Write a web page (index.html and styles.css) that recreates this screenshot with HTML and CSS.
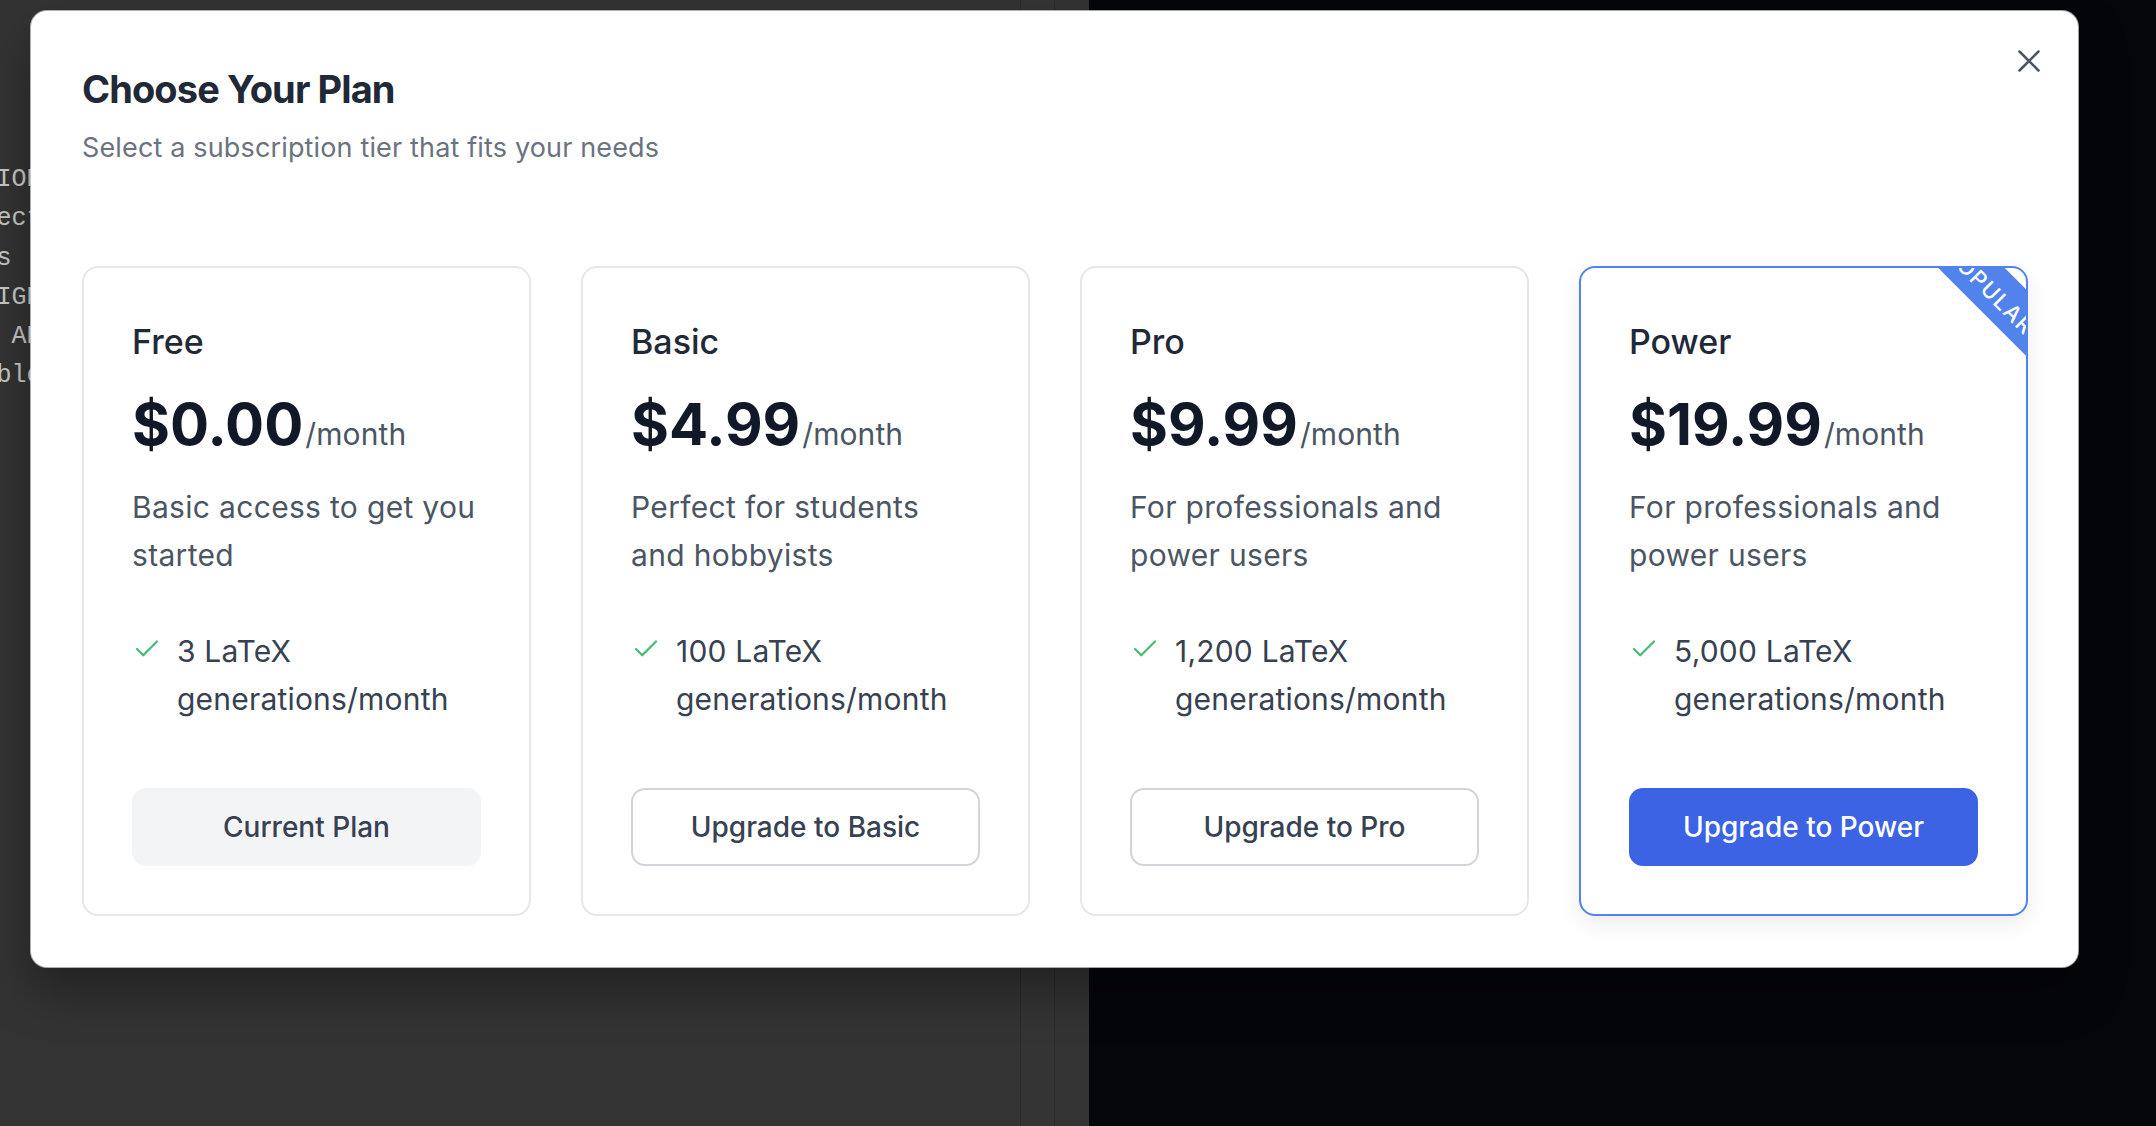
FILE: index.html
```html
<!DOCTYPE html>
<html lang="en">
<head>
<meta charset="utf-8">
<title>Choose Your Plan</title>
<link rel="stylesheet" href="styles.css">
</head>
<body>
<div class="scene">
  <div class="editor">
    <pre class="code">IONS
ection
s
IGNED
 AND
ble</pre>
  </div>
  <div class="sep"></div>
  <div class="pane"></div>
  <div class="sep"></div>
  <div class="pane pane-b"></div>
  <div class="preview"></div>
</div>

<div class="modal">
  <button class="close" aria-label="Close">
    <svg viewBox="0 0 24 24" width="38" height="38" fill="none" stroke="#4b5563" stroke-width="1.6" stroke-linecap="round"><path d="M6 6l12 12M18 6L6 18"/></svg>
  </button>
  <h2 class="title">Choose Your Plan</h2>
  <p class="subtitle">Select a subscription tier that fits your needs</p>

  <div class="plans">
    <div class="plan">
      <h3 class="plan-name">Free</h3>
      <div class="price-row"><span class="price">$0.00</span><span class="per">/month</span></div>
      <p class="desc">Basic access to get you started</p>
      <ul class="features">
        <li><svg class="check" viewBox="0 0 24 24" width="30" height="30" fill="none" stroke="#48bb78" stroke-width="1.8" stroke-linecap="round" stroke-linejoin="round"><polyline points="20 6 9 17 4 12"/></svg><span>3 LaTeX generations/month</span></li>
      </ul>
      <button class="btn btn-current">Current Plan</button>
    </div>

    <div class="plan">
      <h3 class="plan-name">Basic</h3>
      <div class="price-row"><span class="price">$4.99</span><span class="per">/month</span></div>
      <p class="desc">Perfect for students and hobbyists</p>
      <ul class="features">
        <li><svg class="check" viewBox="0 0 24 24" width="30" height="30" fill="none" stroke="#48bb78" stroke-width="1.8" stroke-linecap="round" stroke-linejoin="round"><polyline points="20 6 9 17 4 12"/></svg><span>100 LaTeX generations/month</span></li>
      </ul>
      <button class="btn btn-outline">Upgrade to Basic</button>
    </div>

    <div class="plan">
      <h3 class="plan-name">Pro</h3>
      <div class="price-row"><span class="price">$9.99</span><span class="per">/month</span></div>
      <p class="desc">For professionals and power users</p>
      <ul class="features">
        <li><svg class="check" viewBox="0 0 24 24" width="30" height="30" fill="none" stroke="#48bb78" stroke-width="1.8" stroke-linecap="round" stroke-linejoin="round"><polyline points="20 6 9 17 4 12"/></svg><span>1,200 LaTeX generations/month</span></li>
      </ul>
      <button class="btn btn-outline">Upgrade to Pro</button>
    </div>

    <div class="plan plan-featured">
      <div class="ribbon">POPULAR</div>
      <h3 class="plan-name">Power</h3>
      <div class="price-row"><span class="price">$19.99</span><span class="per">/month</span></div>
      <p class="desc">For professionals and power users</p>
      <ul class="features">
        <li><svg class="check" viewBox="0 0 24 24" width="30" height="30" fill="none" stroke="#48bb78" stroke-width="1.8" stroke-linecap="round" stroke-linejoin="round"><polyline points="20 6 9 17 4 12"/></svg><span>5,000 LaTeX generations/month</span></li>
      </ul>
      <button class="btn btn-primary">Upgrade to Power</button>
    </div>
  </div>
</div>
</body>
</html>
```

FILE: styles.css
```css
* { box-sizing: border-box; }

html, body {
  margin: 0;
  padding: 0;
  width: 2156px;
  height: 1126px;
  overflow: hidden;
  font-family: Inter, "Noto Sans", "Liberation Sans", sans-serif;
}

body { position: relative; background: #05060a; }

.scene {
  display: flex;
  width: 2156px;
  height: 1126px;
}

.editor {
  width: 1020px;
  background: #333333;
  overflow: hidden;
}

.code {
  margin: 160px 0 0 -3.5px;
  font-family: "Liberation Mono", "DejaVu Sans Mono", monospace;
  font-size: 25px;
  line-height: 39.3px;
  color: #c8c8c8;
}

.sep { width: 1px; background: #2a2a2a; }
.pane { width: 33px; background: #343434; }
.pane-b { width: 34px; background: #333333; }
.preview { flex: 1; background: #05060a; }

.modal {
  position: absolute;
  left: 31px;
  top: 11px;
  width: 2047px;
  height: 956px;
  background: #ffffff;
  border-radius: 16px;
  padding: 54px 50px 51px 51px;
  box-shadow: 0 0 0 1px rgba(229, 231, 235, 0.7), 0 24px 48px rgba(0, 0, 0, 0.35);
}

.close {
  position: absolute;
  top: 31px;
  right: 30px;
  width: 38px;
  height: 38px;
  padding: 0;
  border: 0;
  background: transparent;
  display: flex;
}

.title {
  margin: 0;
  font-size: 38px;
  line-height: 48px;
  font-weight: 700;
  color: #1f2937;
  letter-spacing: -0.9px;
}

.subtitle {
  margin: 17px 0 0;
  font-size: 27px;
  line-height: 36px;
  color: #6b7280;
  letter-spacing: 0.15px;
}

.plans {
  margin-top: 100px;
  display: grid;
  grid-template-columns: repeat(4, 1fr);
  gap: 50px;
}

.plan {
  position: relative;
  display: flex;
  flex-direction: column;
  border: 2px solid #e5e7eb;
  border-radius: 16px;
  padding: 48px;
  background: #fff;
}

.plan-featured {
  border-color: #5283ed;
  overflow: hidden;
  box-shadow: 0 8px 22px rgba(0, 0, 0, 0.08);
}

.ribbon {
  position: absolute;
  top: -3px;
  right: -65.5px;
  width: 200px;
  height: 47px;
  padding-top: 6px;
  transform: rotate(45deg);
  background: #5283ed;
  color: #ffffff;
  font-size: 22px;
  font-weight: 500;
  line-height: 41px;
  letter-spacing: 1.5px;
  text-align: center;
}

.plan-name {
  margin: 0;
  font-size: 34px;
  line-height: 52px;
  font-weight: 500;
  color: #1f2937;
}

.price-row {
  margin-top: 24px;
  display: flex;
  align-items: baseline;
}

.price {
  font-size: 58px;
  line-height: 64px;
  font-weight: 700;
  color: #111827;
  letter-spacing: 0;
}

.per {
  margin-left: 2px;
  font-size: 30px;
  color: #4b5563;
  letter-spacing: 0.1px;
}

.desc {
  margin: 27px 0 0;
  font-size: 30px;
  line-height: 48px;
  color: #4b5563;
  letter-spacing: 0.32px;
}

.features {
  list-style: none;
  margin: 48px 0 0;
  padding: 0;
}

.features li {
  display: flex;
  align-items: flex-start;
  gap: 15px;
  font-size: 30px;
  line-height: 48px;
  color: #374151;
  letter-spacing: 0.2px;
}

.check {
  flex: none;
  margin-top: 6.5px;
}

.btn {
  margin-top: 65px;
  width: 100%;
  height: 78px;
  border-radius: 14px;
  border: 2px solid transparent;
  font-family: Inter, "Noto Sans", "Liberation Sans", sans-serif;
  font-size: 28px;
  font-weight: 500;
  color: #374151;
  background: #fff;
}

.btn-current { background: #f3f4f6; border-color: #f3f4f6; }
.btn-outline { border-color: #d1d5db; }
.btn-primary { background: #3b63e3; border-color: #3b63e3; color: #ffffff; }
```
